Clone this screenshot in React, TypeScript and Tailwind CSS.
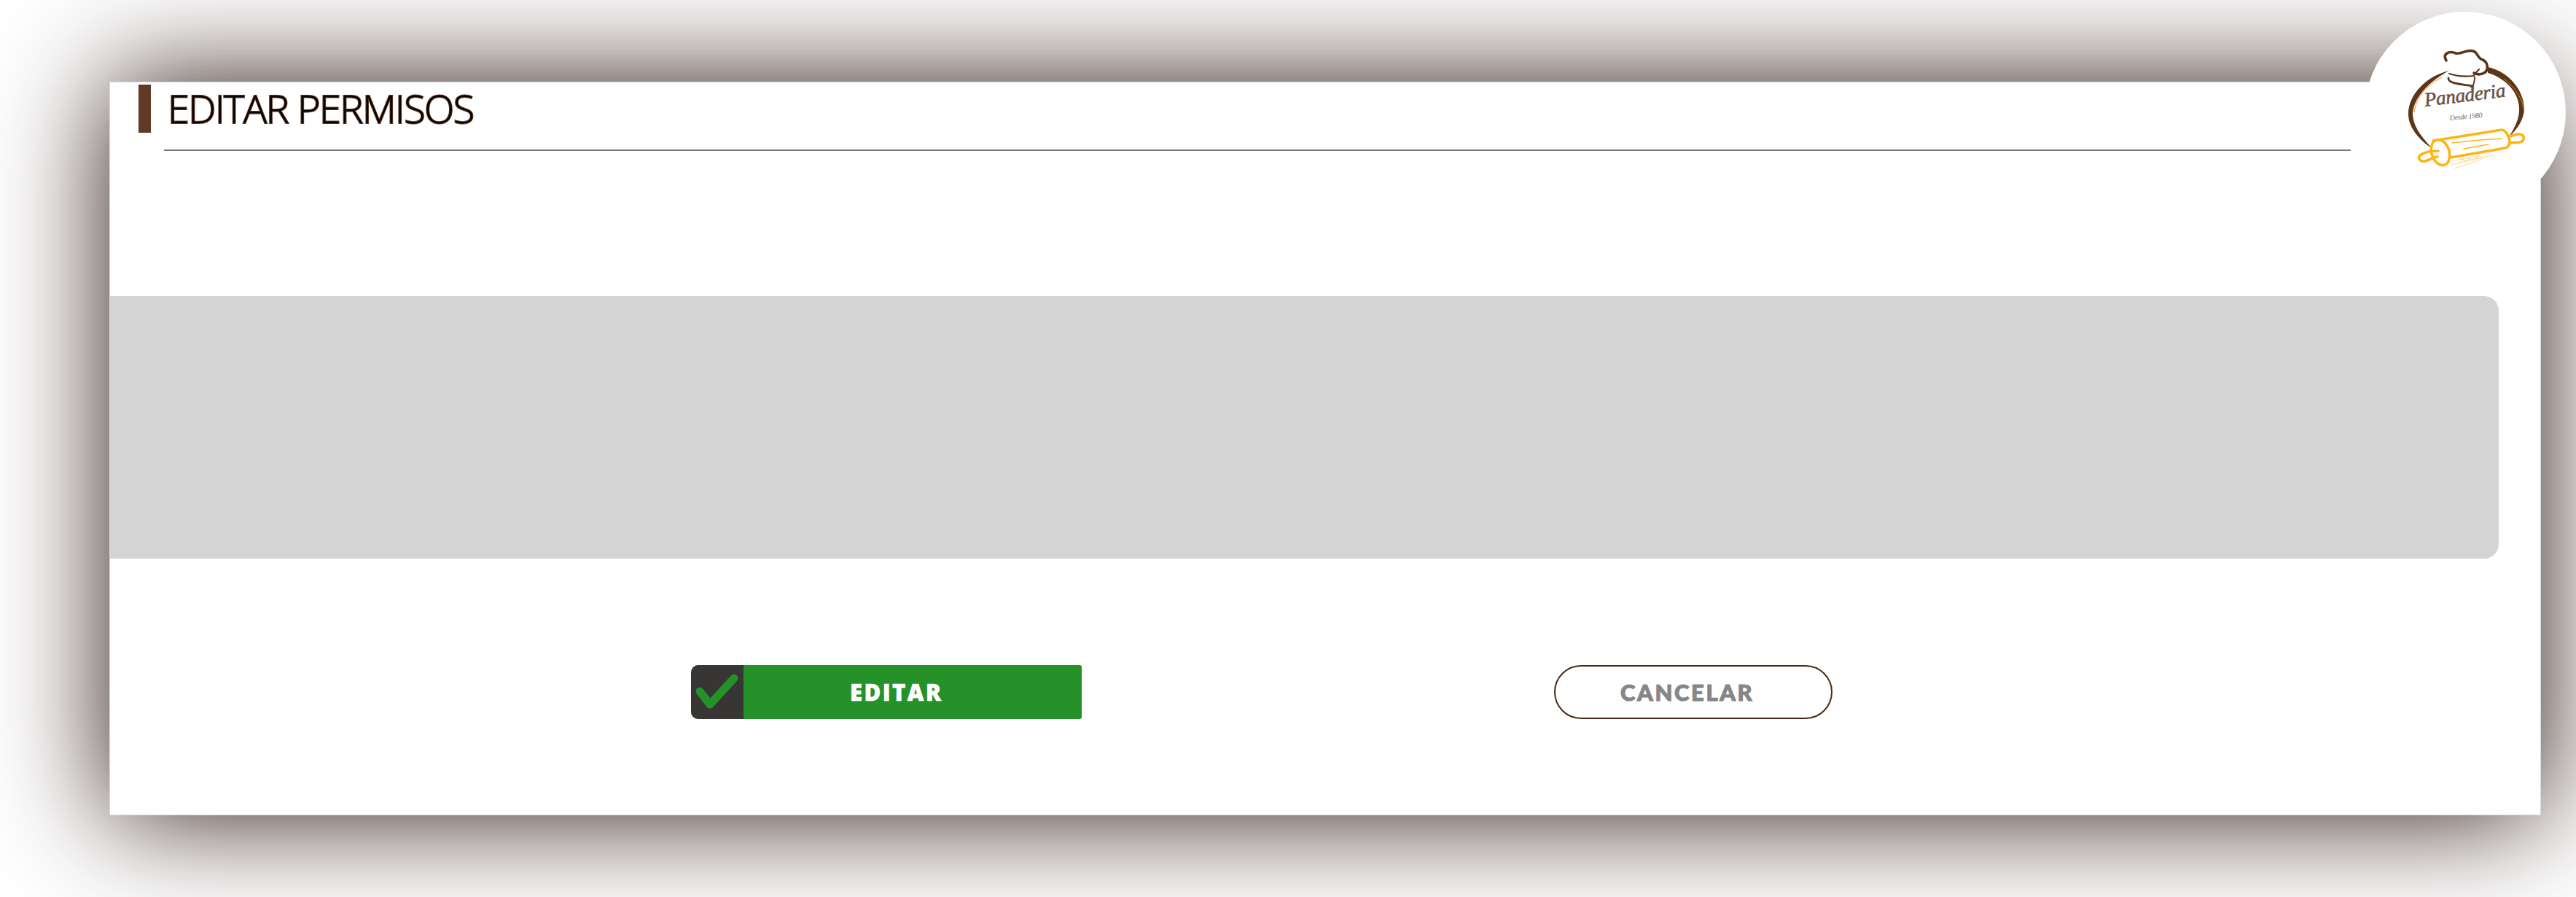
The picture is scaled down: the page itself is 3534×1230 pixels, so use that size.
const Logo = () => (
  <svg viewBox="0 0 180 190" className="absolute left-[56px] top-[34px] h-[190px] w-[180px]" fill="none">
    {/* oval */}
    <path d="M60 47C29 54 3 80 4 108C5 126 20 143 36 153C25 140 10 125 10 105C12 82 35 60 60 47Z" fill="#5a3517" />
    <path d="M50 56C30 66 14 84 12 104" stroke="#e08a1e" strokeWidth="1" />
    <path d="M113 42C142 48 162 74 163 98C163 115 152 128 142 138C150 125 157 112 156 97C155 75 135 56 113 50Z" fill="#5a3517" />
    <path d="M135 58C150 70 161 85 162 100" stroke="#e08a1e" strokeWidth="1" />
    {/* chef hat */}
    <g stroke="#5a3517" strokeLinecap="round">
      <path
        d="M56 33C50 24 60 19 69 23C77 25 84 17 93 20C100 22 98 30 106 32C113 35 115 46 108 50C103 53 97 52 94 50"
        strokeWidth="3.6"
      />
      <path d="M60 51C72 55 84 55 93 54C95 52 98 48 101 45" strokeWidth="2.2" />
      <path d="M59 57C58 64 72 65 92 68" strokeWidth="2.8" />
      <path d="M95 55C95 62 93 68 91 73" strokeWidth="1.8" />
    </g>
    {/* name */}
    <text
      x="27"
      y="96"
      transform="rotate(-7 27 96)"
      textLength="112"
      fontFamily="'Liberation Serif', serif"
      fontStyle="italic"
      fontSize="27"
      fill="#6a5244"
      stroke="#6a5244"
      strokeWidth="0.6"
    >
      Panaderia
    </text>
    <text
      x="61"
      y="115"
      transform="rotate(-5 61 115)"
      textLength="45"
      fontFamily="'Liberation Serif', serif"
      fontStyle="italic"
      fontSize="10"
      fill="#7d6a5e"
    >
      Desde 1980
    </text>
    {/* rolling pin */}
    <g stroke="#fdb515" strokeLinecap="round" strokeLinejoin="round">
      <path d="M38 143C70 138 100 133 132 128C138 129 143 137 143 146C142 150 140 152 137 153L62 166" strokeWidth="3.6" />
      <ellipse cx="48" cy="159" rx="12" ry="18" transform="rotate(-18 48 159)" strokeWidth="3.6" />
      <path d="M45 157C35 157 24 159 19 164C17 169 22 172 27 171C33 169 38 166 44 165" strokeWidth="3.6" />
      <path d="M143 137C148 136 152 133 157 134C164 135 164 143 157 145C152 146 148 145 143 146" strokeWidth="3.6" />
      <path d="M64 146C88 143 110 141 132 140" strokeWidth="1.6" />
      <path d="M80 154C92 152 102 150 114 148" strokeWidth="1.6" />
    </g>
    {/* wheat */}
    <g stroke="#fcd27a" strokeWidth="0.9" strokeLinecap="round">
      <path d="M64 176C85 170 105 166 122 162" />
      <path d="M68 181C85 175 95 172 105 168" />
      <path d="M66 170C80 168 90 166 100 164" />
      <path d="M76 167L84 172M84 165L92 170M92 164L100 169M100 163L108 167M72 174L80 168M82 172L90 166M92 170L100 164" />
    </g>
  </svg>
);

const App = () => {
  return (
    <div className="h-[1230px] w-full overflow-hidden bg-white pl-[150px] pt-[112px]">
      <div className="relative flex h-[1006px] w-[3336px] flex-col border border-[#d9d9d9] bg-white shadow-[0_0_150px_#2b1711]">
        {/* Title */}
        <div className="flex items-center gap-[23px] pl-[39px] pt-[3px]">
          <div className="h-[66px] w-[17px] bg-[#5f3b26]" />
          <h1 className="pb-[2px] font-['Open_Sans',sans-serif] text-[54px] leading-[64px] font-light tracking-[-1.5px] text-[#0a0300] [-webkit-text-stroke:2px_#5f3b26] [paint-order:stroke_fill]">
            EDITAR PERMISOS
          </h1>
        </div>
        <div className="ml-[74px] mt-[23px] h-[2px] w-[3000px] bg-[#777777]" />

        {/* Empty permissions panel */}
        <div className="mt-[199px] h-[360px] w-[3277px] rounded-r-[20px] bg-[#d4d4d4]" />

        {/* Actions */}
        <div className="mt-[146px] flex gap-[648px] pl-[797px]">
          <button className="flex h-[74px] w-[536px] overflow-hidden rounded-l-[10px] rounded-r-[3px] bg-[#249129]">
            <span className="flex h-full w-[72px] items-center justify-center bg-[#383634]">
              <svg viewBox="0 0 72 74" className="h-[74px] w-[72px]" fill="none">
                <path d="M12 36L26 54L59 18" stroke="#249129" strokeWidth="11" strokeLinecap="round" strokeLinejoin="round" />
              </svg>
            </span>
            <span className="flex h-full flex-1 items-center pl-[146px] font-['Open_Sans',sans-serif] text-[31px] font-extrabold tracking-[2.5px] text-white [-webkit-text-stroke:0.6px_#ffffff]">
              EDITAR
            </span>
          </button>
          <button className="flex h-[74px] w-[382px] items-center rounded-[37px] border-2 border-[#4a2813] bg-white pl-[89px] font-['Lato',sans-serif] text-[31px] font-black tracking-[2.6px] text-[#868686] [-webkit-text-stroke:1.1px_#868686]">
            CANCELAR
          </button>
        </div>

        {/* Logo badge */}
        <div className="absolute -right-[35px] -top-[97px] h-[276px] w-[276px] rounded-full bg-white">
          <Logo />
        </div>
      </div>
    </div>
  );
};

export default App;
